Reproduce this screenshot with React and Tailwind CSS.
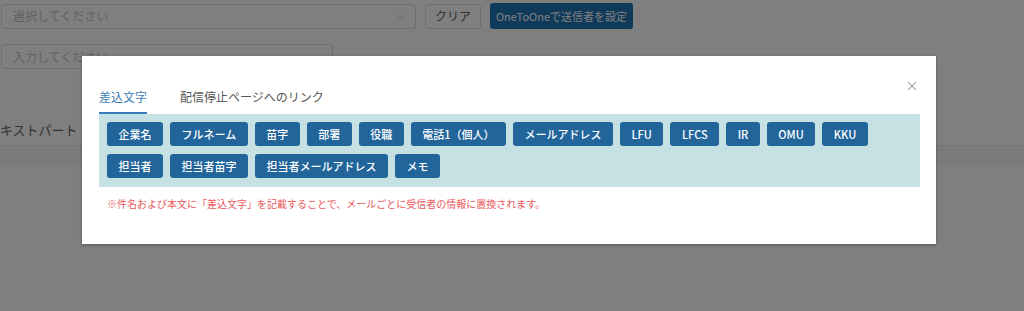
import { X, ChevronDown } from 'lucide-react'

const TAGS = [
  '企業名', 'フルネーム', '苗字', '部署', '役職', '電話1（個人）', 'メールアドレス',
  'LFU', 'LFCS', 'IR', 'OMU', 'KKU', '担当者', '担当者苗字', '担当者メールアドレス', 'メモ',
]

export default function App() {
  return (
    <div className="relative h-[311px] w-[1024px] overflow-hidden bg-white font-['Noto_Sans_CJK_JP','Noto_Sans',sans-serif] text-[#606266]">
      {/* page behind the dialog */}
      <div className="flex items-center gap-[9px] pl-px pt-[3px]">
        <div className="flex h-[25px] w-[415px] items-center justify-between rounded-[3px] border border-[#dcdfe6] bg-white pl-[11px] pr-[8px]">
          <span className="text-[12px] text-[#c0c4cc]">選択してください</span>
          <ChevronDown size={13} strokeWidth={1.5} className="text-[#c0c4cc]" />
        </div>
        <button className="h-[25px] w-[56px] rounded-[3px] border border-[#dcdfe6] bg-white text-[12px] text-[#606266]">
          クリア
        </button>
        <button className="h-[26px] w-[143px] rounded-[3px] bg-[#1f75b4] text-[11px] text-white">
          OneToOneで送信者を設定
        </button>
      </div>
      <div className="mt-[15px] pl-px">
        <div className="flex h-[25px] w-[332px] items-center rounded-[3px] border border-[#dcdfe6] bg-white pl-[11px]">
          <span className="text-[12px] text-[#c0c4cc]">入力してください</span>
        </div>
      </div>
      <div className="mt-[50px] h-[21px] text-[13px] leading-[21px] text-[#606266]">キストパート</div>
      <div className="mt-[5px] h-[21px] border-t border-[#e4e7ed] bg-[#f7f7f7]" />

      {/* overlay */}
      <div className="absolute inset-0 bg-black/50" />

      {/* dialog */}
      <div className="absolute left-[82px] top-[56px] h-[188px] w-[854px] bg-white pl-[17px] pr-[16px] pt-[33px] shadow-[0_1px_3px_rgba(0,0,0,0.3)]">
        <button className="absolute right-[17px] top-[23px] text-[#909399]">
          <X size={14} strokeWidth={1.8} />
        </button>

        <div className="flex gap-[33px] text-[12px] leading-4">
          <div className="border-b-2 border-[#3b7cb8] pb-[7px] text-[#3b7cb8]">差込文字</div>
          <div className="pb-[7px] text-[#555]">配信停止ページへのリンク</div>
        </div>

        <div className="flex flex-wrap gap-x-[7px] gap-y-2 bg-[#c6e1e4] px-2 pb-[9px] pt-2">
          {TAGS.map(t => (
            <button
              key={t}
              className="h-6 rounded-[3px] bg-[#22659b] px-[11.5px] text-[11px] font-medium text-white"
            >
              {t}
            </button>
          ))}
        </div>

        <p className="mt-[10px] pl-2 text-[10px] leading-[14px] text-[#e9585a]">
          ※件名および本文に「差込文字」を記載することで、メールごとに受信者の情報に置換されます。
        </p>
      </div>
    </div>
  )
}
